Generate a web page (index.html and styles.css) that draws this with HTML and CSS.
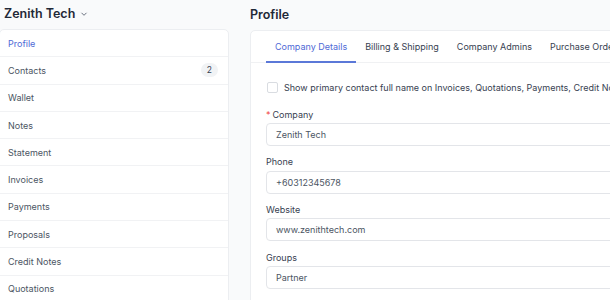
FILE: index.html
```html
<!DOCTYPE html>
<html>
<head>
<meta charset="utf-8">
<link rel="stylesheet" href="styles.css">
</head>
<body>
<div class="page">
  <aside class="side">
    <div class="side-head">
      <span class="side-title">Zenith Tech</span>
      <svg class="chev" width="8" height="8" viewBox="0 0 8 8"><path d="M1.5 2.8 L4 5.3 L6.5 2.8" fill="none" stroke="#6b7280" stroke-width="1"/></svg>
    </div>
    <nav class="side-card">
      <div class="side-item active">Profile</div>
      <div class="side-item">Contacts <span class="badge">2</span></div>
      <div class="side-item">Wallet</div>
      <div class="side-item">Notes</div>
      <div class="side-item">Statement</div>
      <div class="side-item">Invoices</div>
      <div class="side-item">Payments</div>
      <div class="side-item">Proposals</div>
      <div class="side-item">Credit Notes</div>
      <div class="side-item">Quotations</div>
    </nav>
  </aside>
  <main class="main">
    <h1 class="main-title">Profile</h1>
    <section class="card">
      <div class="tabs">
        <div class="tab active">Company Details</div>
        <div class="tab">Billing &amp; Shipping</div>
        <div class="tab">Company Admins</div>
        <div class="tab">Purchase Orders</div>
      </div>
      <div class="form">
        <label class="check"><span class="box"></span>Show primary contact full name on Invoices, Quotations, Payments, Credit Notes and Proposals</label>
        <div class="field">
          <div class="label"><span class="req">*</span> Company</div>
          <div class="input">Zenith Tech</div>
        </div>
        <div class="field">
          <div class="label">Phone</div>
          <div class="input">+60312345678</div>
        </div>
        <div class="field">
          <div class="label">Website</div>
          <div class="input">www.zenithtech.com</div>
        </div>
        <div class="field">
          <div class="label">Groups</div>
          <div class="input">Partner</div>
        </div>
      </div>
    </section>
  </main>
</div>
</body>
</html>
```
FILE: styles.css
```css
* { box-sizing: border-box; }
html, body { margin: 0; padding: 0; }
body {
  background: #f9fafb;
  font-family: Inter, "Noto Sans", sans-serif;
  color: #4b5563;
  width: 610px;
  height: 300px;
  overflow: hidden;
}
.page {
  display: flex;
  gap: 21px;
  width: 900px;
}
.side {
  width: 230px;
  flex: none;
  margin-left: -1px;
}
.side-head {
  height: 29px;
  display: flex;
  align-items: center;
  gap: 5px;
  padding-left: 5px;
  padding-bottom: 2px;
}
.side-title {
  font-size: 12.5px;
  font-weight: 600;
  color: #1f2937;
}
.chev { margin-top: 1px; }
.side-card {
  background: #fff;
  border: 1px solid #eceef1;
  border-radius: 5px;
  padding-bottom: 20px;
}
.side-item {
  height: 27.3px;
  display: flex;
  align-items: center;
  justify-content: space-between;
  padding: 0 10px 0 8px;
  font-size: 9px;
  color: #4b5563;
  border-bottom: 1px solid #f1f2f4;
}
.side-item.active { color: #4f6ad6; }
.badge {
  background: #f1f3f5;
  color: #374151;
  font-size: 8.5px;
  border-radius: 7px;
  padding: 1px 6px;
  line-height: 12px;
}
.main {
  width: 600px;
  flex: none;
}
.main-title {
  margin: 0;
  height: 29px;
  display: flex;
  align-items: center;
  padding-bottom: 1px;
  font-size: 12.5px;
  font-weight: 600;
  color: #1f2937;
}
.card {
  background: #fff;
  border: 1px solid #eceef1;
  border-radius: 5px;
  margin-top: 1px;
}
.tabs {
  display: flex;
  padding: 0 15px;
  border-bottom: 1px solid #f0f1f3;
}
.tab {
  height: 32px;
  display: flex;
  align-items: center;
  padding: 0 9px;
  font-size: 9px;
  color: #374151;
  border-bottom: 2px solid transparent;
  margin-bottom: -1px;
  padding-top: 1px;
}
.tab.active {
  color: #4f6ad6;
  border-bottom-color: #5b78d8;
}
.form {
  padding: 17px 15px 30px 15px;
  display: flex;
  flex-direction: column;
}
.check {
  display: flex;
  align-items: center;
  gap: 6px;
  font-size: 9px;
  color: #374151;
  white-space: nowrap;
  height: 14px;
  margin-bottom: 13px;
  padding-left: 1px;
}
.box {
  width: 11px;
  height: 11px;
  border: 1px solid #d9dce1;
  border-radius: 2px;
  flex: none;
  background: #fff;
}
.field {
  display: flex;
  flex-direction: column;
  gap: 2px;
  margin-bottom: 8.7px;
}
.label {
  font-size: 9px;
  color: #374151;
  height: 14px;
  display: flex;
  align-items: center;
  gap: 2px;
}
.req { color: #ef4444; }
.input {
  height: 23px;
  border: 1px solid #e3e5e9;
  border-radius: 4px;
  display: flex;
  align-items: center;
  padding: 0 9px;
  font-size: 9px;
  color: #4b5563;
  background: #fff;
}
```
